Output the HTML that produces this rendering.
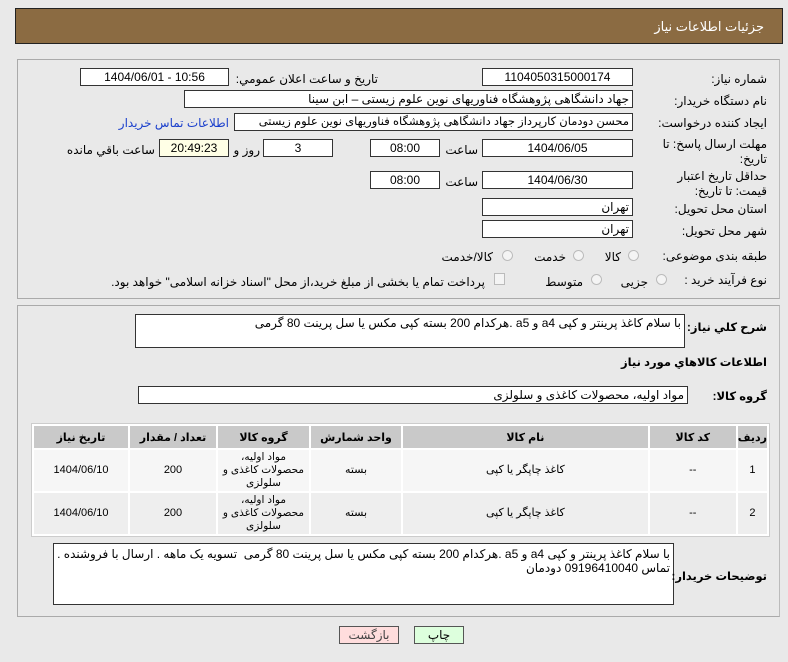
<!DOCTYPE html>
<html><head><meta charset="utf-8"><style>
*{box-sizing:border-box;margin:0;padding:0}
body{width:788px;height:662px;background:#e9e9e9;position:relative;font-family:"Liberation Sans","DejaVu Sans",sans-serif;font-size:12px;color:#000;overflow:hidden}
.a{position:absolute;white-space:nowrap}
.l{position:absolute;white-space:nowrap;direction:rtl;text-align:right;font-size:12px;z-index:2}
.b{position:absolute;background:#fff;border:1px solid #333;text-align:center;line-height:16px;font-size:12px;white-space:nowrap;overflow:hidden}
.r{direction:rtl;text-align:right;padding-right:3px}
.hd{position:absolute;left:15px;top:8px;width:768px;height:36px;background:#8b6b42;border:1px solid #222}
.pn{position:absolute;border:1px solid #aaa;border-right-color:#bbb}
table{position:absolute;left:31px;top:423px;width:739px;border-collapse:separate;border-spacing:2px;background:#fff;border:1px solid #ccc;direction:rtl}
td,th{text-align:center;font-size:11px;padding:0;overflow:hidden}
th{background:#c9c9c9;height:22px;font-weight:bold}
td{background:#f6f6f6;height:41px;line-height:13px;white-space:nowrap}
tr.g td{background:#eeeeee}
.rad{position:absolute;width:11px;height:11px;border:1px solid #bbb;border-radius:50%;background:#f4f4f4}
.bl{font-weight:bold;font-size:11.5px}
</style></head><body>
<div class="hd"></div>
<div class="l" style="right:24px;top:19px;color:#fff;font-size:13px">جزئیات اطلاعات نیاز</div>
<div class="pn" style="left:17px;top:59px;width:763px;height:240px"></div>
<div class="pn" style="left:17px;top:305px;width:763px;height:312px"></div>

<div class="l" style="right:21px;top:72px">شماره نیاز:</div>
<div class="b" style="left:482px;top:68px;width:151px;height:18px">1104050315000174</div>
<div class="l" style="right:410px;top:72px">تاریخ و ساعت اعلان عمومي:</div>
<div class="b" style="left:80px;top:68px;width:149px;height:18px">1404/06/01 - 10:56</div>

<div class="l" style="right:21px;top:94px">نام دستگاه خریدار:</div>
<div class="b r" style="left:184px;top:90px;width:449px;height:18px">جهاد دانشگاهی پژوهشگاه فناوریهای نوین علوم زیستی – ابن سینا</div>

<div class="l" style="right:21px;top:116px">ایجاد کننده درخواست:</div>
<div class="b r" style="left:234px;top:113px;width:399px;height:18px;font-size:11.5px">محسن دودمان کارپرداز جهاد دانشگاهی پژوهشگاه فناوریهای نوین علوم زیستی</div>
<div class="l" style="right:559px;top:116px;color:#1a3fcc">اطلاعات تماس خریدار</div>

<div class="l" style="right:21px;top:137px;line-height:15px;width:118px;white-space:normal">مهلت ارسال پاسخ: تا تاریخ:</div>
<div class="b" style="left:482px;top:139px;width:151px;height:18px">1404/06/05</div>
<div class="l" style="right:310px;top:143px">ساعت</div>
<div class="b" style="left:370px;top:139px;width:70px;height:18px">08:00</div>
<div class="b" style="left:263px;top:139px;width:70px;height:18px">3</div>
<div class="l" style="right:528px;top:143px">روز و</div>
<div class="b" style="left:159px;top:139px;width:70px;height:18px;background:#ffffe6">20:49:23</div>
<div class="l" style="right:633px;top:143px">ساعت باقي مانده</div>

<div class="l" style="right:21px;top:169px;line-height:15px;width:118px;white-space:normal">حداقل تاریخ اعتبار قیمت: تا تاریخ:</div>
<div class="b" style="left:482px;top:171px;width:151px;height:18px">1404/06/30</div>
<div class="l" style="right:310px;top:175px">ساعت</div>
<div class="b" style="left:370px;top:171px;width:70px;height:18px">08:00</div>

<div class="l" style="right:21px;top:202px">استان محل تحویل:</div>
<div class="b r" style="left:482px;top:198px;width:151px;height:18px">تهران</div>
<div class="l" style="right:21px;top:224px">شهر محل تحویل:</div>
<div class="b r" style="left:482px;top:220px;width:151px;height:18px">تهران</div>

<div class="l" style="right:21px;top:249px">طبقه بندی موضوعی:</div>
<div class="rad" style="left:628px;top:250px"></div><div class="l" style="right:167px;top:250px">کالا</div>
<div class="rad" style="left:573px;top:250px"></div><div class="l" style="right:222px;top:250px">خدمت</div>
<div class="rad" style="left:502px;top:250px"></div><div class="l" style="right:295px;top:250px">کالا/خدمت</div>

<div class="l" style="right:21px;top:273px">نوع فرآیند خرید :</div>
<div class="rad" style="left:656px;top:274px"></div><div class="l" style="right:140px;top:275px">جزیی</div>
<div class="rad" style="left:591px;top:274px"></div><div class="l" style="right:205px;top:275px">متوسط</div>
<div class="a" style="left:494px;top:273px;width:11px;height:12px;border:1px solid #bbb;background:#f4f4f4"></div>
<div class="l" style="right:303px;top:275px">پرداخت تمام یا بخشی از مبلغ خرید،از محل "اسناد خزانه اسلامی" خواهد بود.</div>

<div class="l bl" style="right:21px;top:320px">شرح کلي نياز:</div>
<div class="b r" style="left:135px;top:314px;width:550px;height:34px;text-align:right;line-height:16px">با سلام کاغذ پرینتر و کپی a4 و a5 .هرکدام 200 بسته کپی مکس یا سل پرینت 80 گرمی</div>
<div class="l bl" style="right:21px;top:355px">اطلاعات کالاهاي مورد نياز</div>
<div class="l bl" style="right:21px;top:389px">گروه کالا:</div>
<div class="b r" style="left:138px;top:386px;width:550px;height:18px">مواد اولیه، محصولات کاغذی و سلولزی</div>

<table>
<tr><th style="width:25px">ردیف</th><th style="width:86px">کد کالا</th><th>نام کالا</th><th style="width:90px">واحد شمارش</th><th style="width:91px">گروه کالا</th><th style="width:86px">تعداد / مقدار</th><th style="width:94px">تاریخ نیاز</th></tr>
<tr><td>1</td><td>--</td><td>کاغذ چاپگر یا کپی</td><td>بسته</td><td style="font-size:10.5px">مواد اولیه،<br>محصولات کاغذی و<br>سلولزی</td><td>200</td><td>1404/06/10</td></tr>
<tr class="g"><td>2</td><td>--</td><td>کاغذ چاپگر یا کپی</td><td>بسته</td><td style="font-size:10.5px">مواد اولیه،<br>محصولات کاغذی و<br>سلولزی</td><td>200</td><td>1404/06/10</td></tr>
</table>

<div class="l bl" style="right:21px;top:569px">توضیحات خریدار:</div>
<div class="b r" style="left:53px;top:543px;width:621px;height:62px;text-align:right;white-space:normal;line-height:14px;padding-top:3px">با سلام کاغذ پرینتر و کپی a4 و a5 .هرکدام 200 بسته کپی مکس یا سل پرینت 80 گرمی &nbsp;تسویه یک ماهه . ارسال با فروشنده . تماس 09196410040 دودمان</div>

<div class="b" style="left:339px;top:626px;width:60px;height:18px;background:#fdd;border-color:#555;color:#444">بازگشت</div>
<div class="b" style="left:414px;top:626px;width:50px;height:18px;background:#dfd;border-color:#555">چاپ</div>
</body></html>
